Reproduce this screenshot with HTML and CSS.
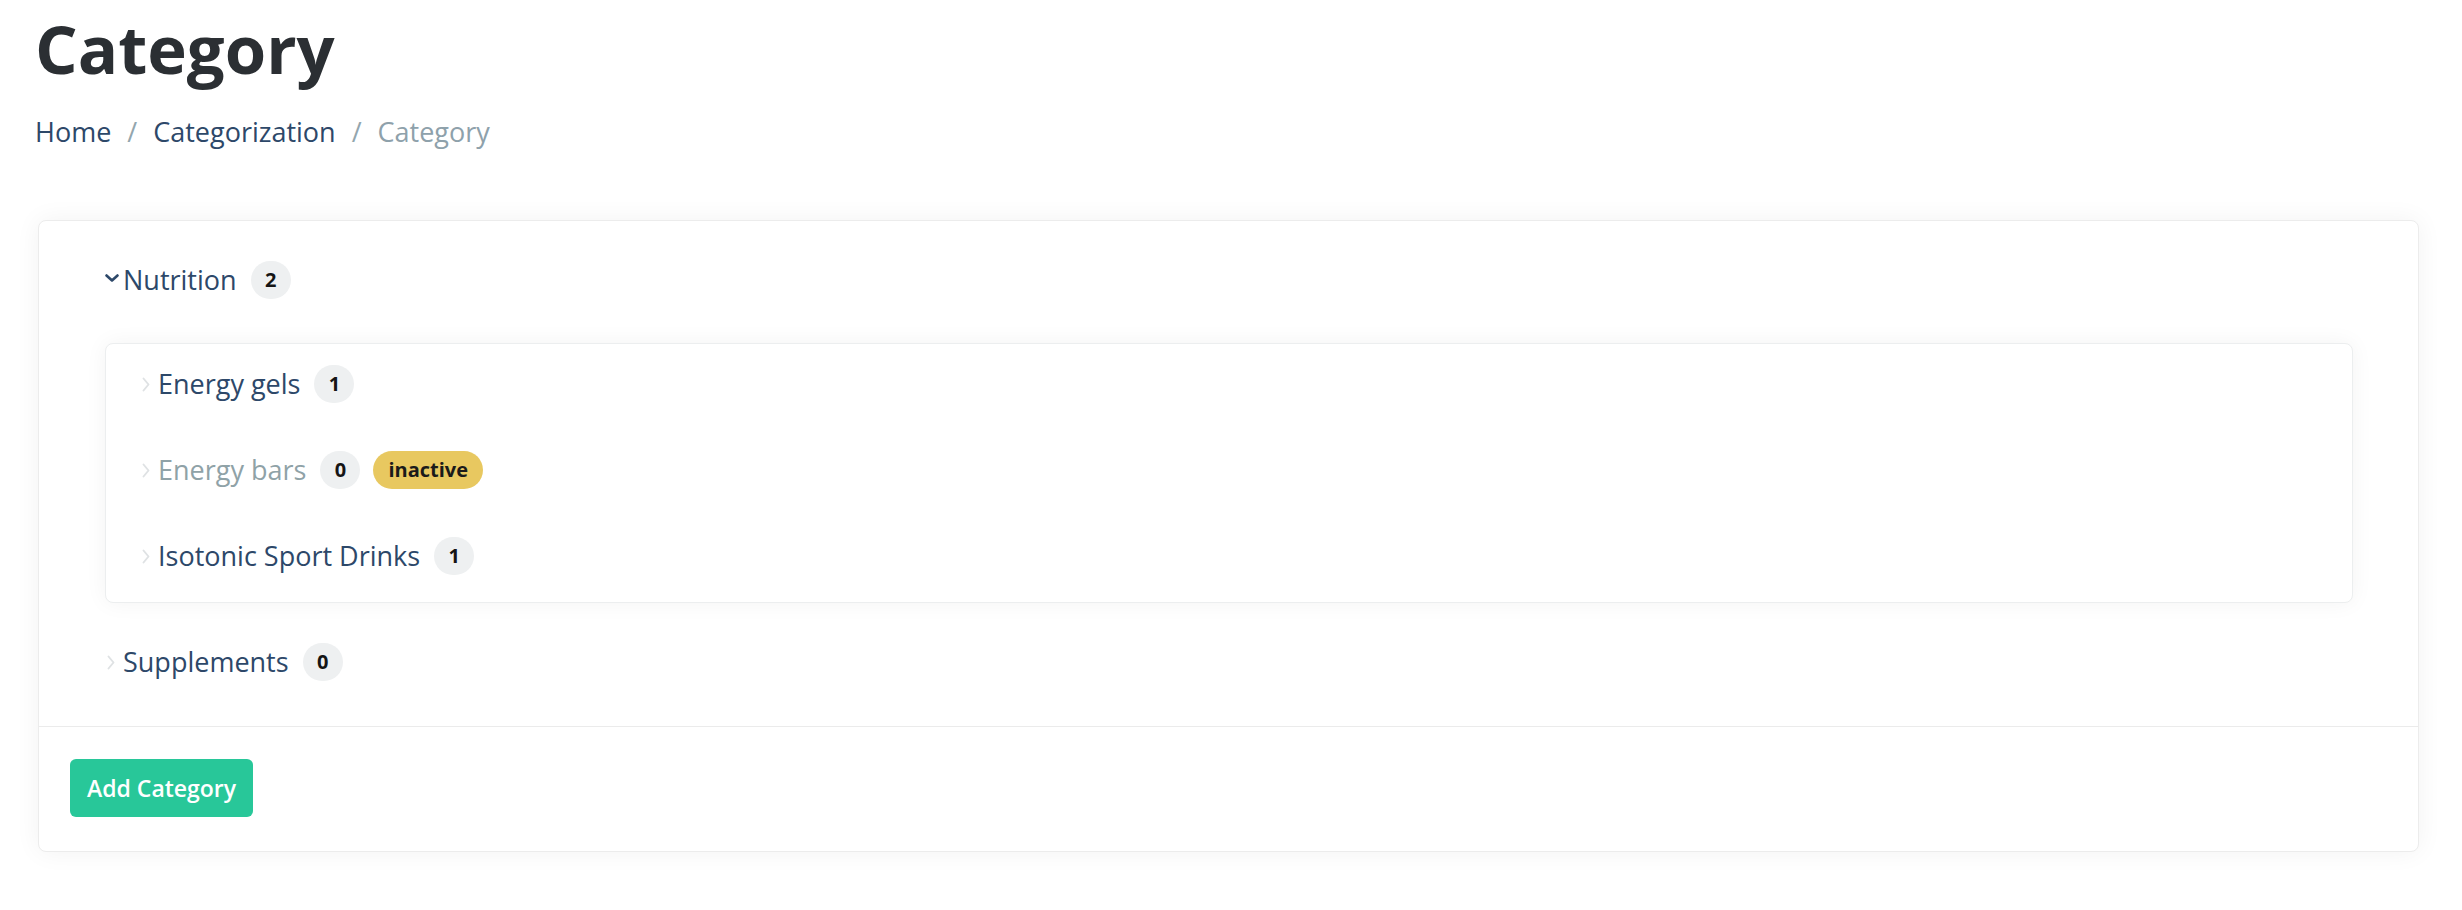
FILE: index.html
```html
<!DOCTYPE html>
<html lang="en">
<head>
<meta charset="utf-8">
<title>Category</title>
<link rel="stylesheet" href="styles.css">
</head>
<body>
<div class="page">
  <header class="page-head">
    <h1 class="title">Category</h1>
    <nav class="crumbs">
      <a class="crumb" href="#">Home</a><span class="sep">/</span><a class="crumb" href="#">Categorization</a><span class="sep">/</span><span class="crumb current">Category</span>
    </nav>
  </header>

  <section class="card">
    <div class="card-body">
      <ul class="tree">
        <li class="node">
          <div class="row top">
            <span class="toggle"><svg class="chev-down" width="14" height="8" viewBox="0 0 14 8"><path d="M1.5 1.5 L7 6.5 L12.5 1.5" fill="none" stroke="#2d4869" stroke-width="2.6" stroke-linecap="round" stroke-linejoin="round"/></svg></span>
            <span class="label">Nutrition</span>
            <span class="count">2</span>
          </div>
          <ul class="children">
            <li class="row sub">
              <span class="toggle"><svg class="chev-right" width="8" height="15" viewBox="0 0 8 15"><path d="M1.5 1.5 L6.5 7.5 L1.5 13.5" fill="none" stroke="#dfe2e4" stroke-width="1.9" stroke-linecap="round" stroke-linejoin="round"/></svg></span>
              <span class="label">Energy gels</span>
              <span class="count">1</span>
            </li>
            <li class="row sub">
              <span class="toggle"><svg class="chev-right" width="8" height="15" viewBox="0 0 8 15"><path d="M1.5 1.5 L6.5 7.5 L1.5 13.5" fill="none" stroke="#dfe2e4" stroke-width="1.9" stroke-linecap="round" stroke-linejoin="round"/></svg></span>
              <span class="label muted">Energy bars</span>
              <span class="count">0</span>
              <span class="status">inactive</span>
            </li>
            <li class="row sub">
              <span class="toggle"><svg class="chev-right" width="8" height="15" viewBox="0 0 8 15"><path d="M1.5 1.5 L6.5 7.5 L1.5 13.5" fill="none" stroke="#dfe2e4" stroke-width="1.9" stroke-linecap="round" stroke-linejoin="round"/></svg></span>
              <span class="label">Isotonic Sport Drinks</span>
              <span class="count">1</span>
            </li>
          </ul>
        </li>
        <li class="node">
          <div class="row top">
            <span class="toggle"><svg class="chev-right" width="8" height="15" viewBox="0 0 8 15"><path d="M1.5 1.5 L6.5 7.5 L1.5 13.5" fill="none" stroke="#dfe2e4" stroke-width="1.9" stroke-linecap="round" stroke-linejoin="round"/></svg></span>
            <span class="label">Supplements</span>
            <span class="count">0</span>
          </div>
        </li>
      </ul>
    </div>
    <div class="card-foot">
      <button class="btn" type="button">Add Category</button>
    </div>
  </section>
</div>
</body>
</html>
```

FILE: styles.css
```css
html, body {
  margin: 0;
  padding: 0;
  background: #ffffff;
}

body {
  font-family: "Open Sans", "Noto Sans", sans-serif;
  color: #2d4869;
}

.page {
  padding: 15px 43px 40px 35px;
}

.title {
  margin: 0;
  font-size: 67px;
  line-height: 67px;
  font-weight: 700;
  color: #2b2f33;
}

.crumbs {
  margin-top: 32px;
  display: flex;
  align-items: center;
  font-size: 27px;
  line-height: 36px;
}

.crumb {
  color: #2d4869;
  text-decoration: none;
}

.crumb.current {
  color: #8ea1ab;
}

.sep {
  padding: 0 16px;
  color: #93a6ae;
}

.card {
  margin: 70px 0 0 3px;
  background: #ffffff;
  border: 1px solid #ececec;
  border-radius: 8px;
  box-shadow: 0 0 26px rgba(0, 0, 0, 0.055);
}

.card-body {
  padding: 31px 65px 36px 66px;
}

.tree,
.children {
  list-style: none;
  margin: 0;
  padding: 0;
}

.row {
  display: flex;
  align-items: center;
  font-size: 27px;
  line-height: 36px;
}

.row.top {
  height: 56px;
}

.children {
  margin: 35px 0 31px;
  padding-left: 34px;
  background: #ffffff;
  border: 1px solid #eceeef;
  border-radius: 8px;
  box-shadow: 0 0 22px rgba(0, 0, 0, 0.05);
}

.row.sub {
  height: 86px;
  padding-bottom: 6px;
  box-sizing: border-box;
}

.toggle {
  width: 18px;
  flex: none;
  display: flex;
  align-items: center;
}

.chev-down {
  margin-top: -5px;
}

.chev-right {
  margin-left: 2px;
}

.label {
  color: #2d4869;
}

.label.muted {
  color: #8fa2a7;
}

.count {
  margin-left: 14px;
  min-width: 40px;
  height: 38px;
  border-radius: 19px;
  background: #eef0f1;
  color: #151515;
  font-size: 20px;
  font-weight: 700;
  display: inline-flex;
  align-items: center;
  justify-content: center;
}

.status {
  margin-left: 13px;
  height: 38px;
  padding: 0 15px;
  border-radius: 19px;
  background: #e8c860;
  color: #1a1a1a;
  font-size: 20px;
  font-weight: 700;
  display: inline-flex;
  align-items: center;
}

.card-foot {
  border-top: 1px solid #ebebeb;
  padding: 32px 31px 34px;
}

.btn {
  height: 58px;
  padding: 0 17px;
  border: none;
  border-radius: 6px;
  background: #28c799;
  color: #ffffff;
  font-family: "Open Sans", "Noto Sans", sans-serif;
  font-size: 23px;
  font-weight: 600;
  cursor: pointer;
}
```
